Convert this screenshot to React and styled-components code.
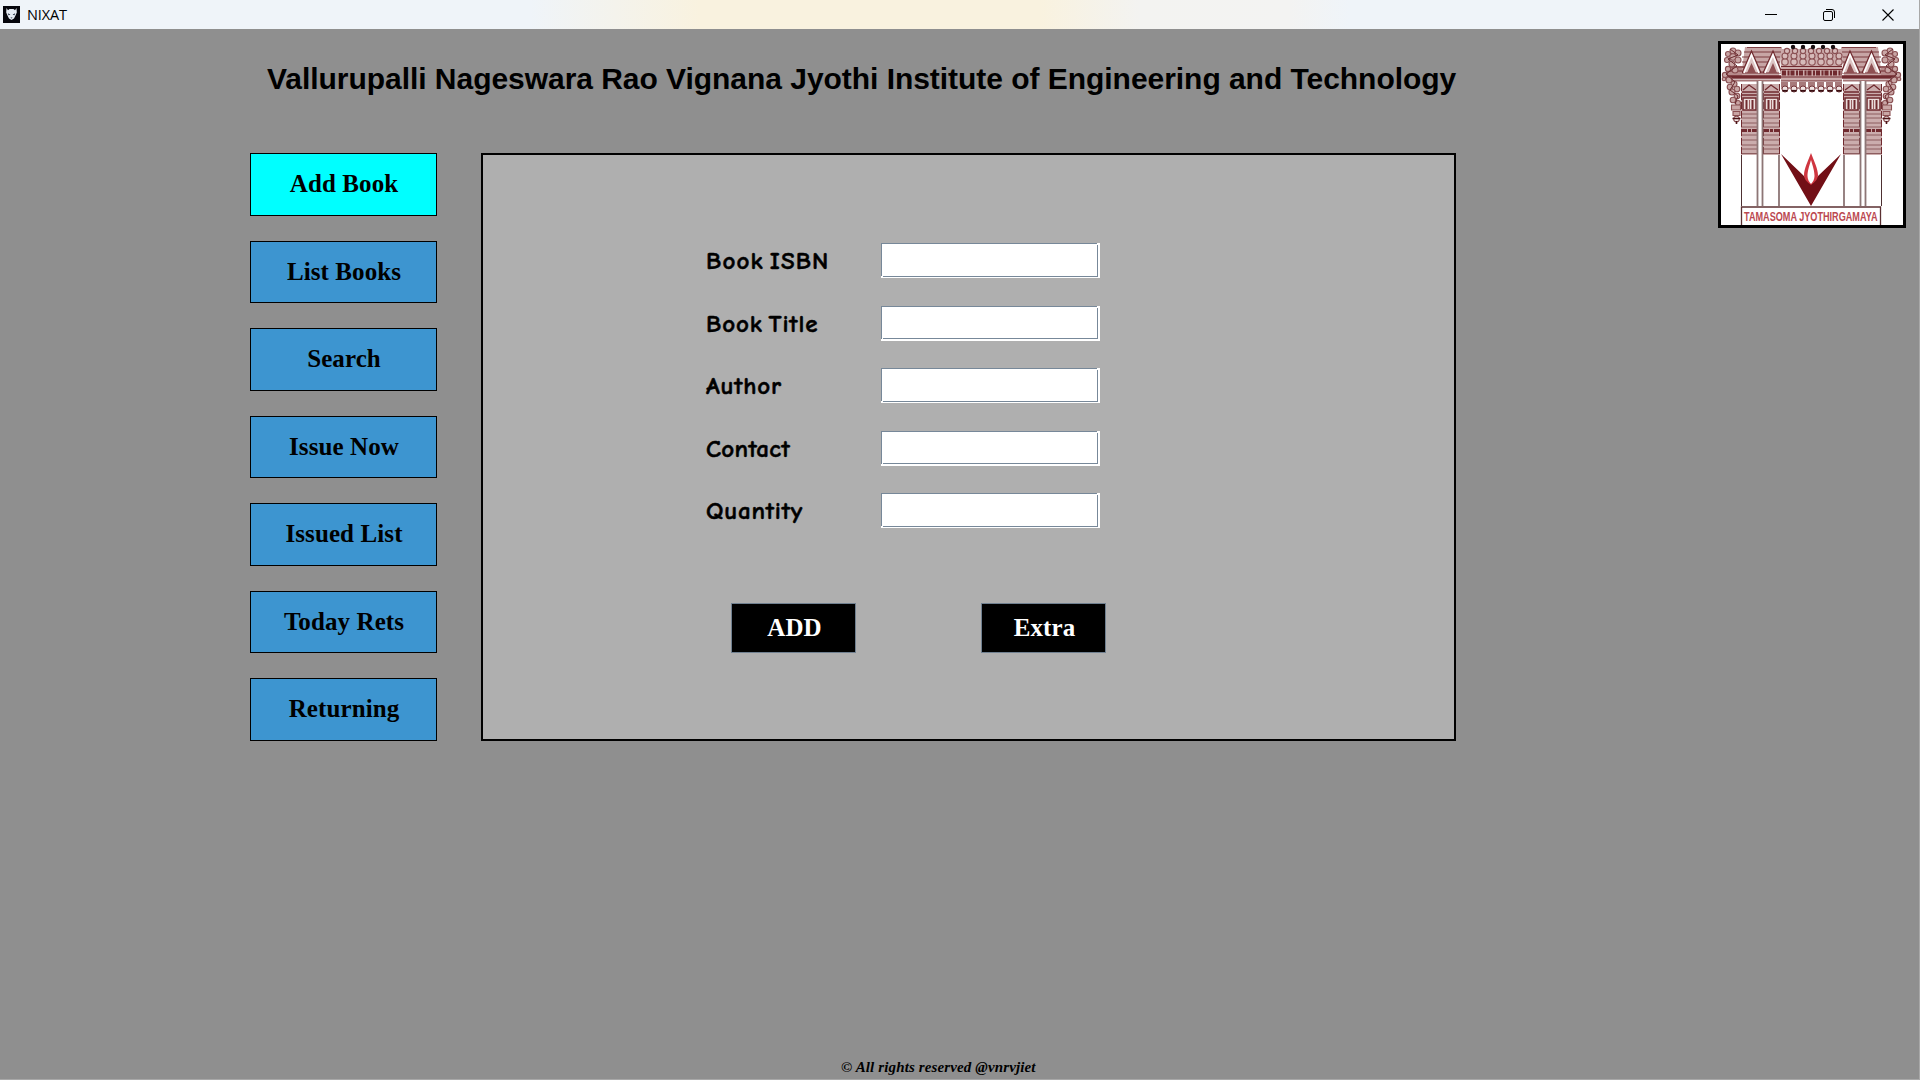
import React from 'react';
import styled, { createGlobalStyle } from 'styled-components';

const Global = createGlobalStyle`
  * { box-sizing: border-box; }
  body { margin: 0; background: #8f8f8f; overflow: hidden; }
`;

const Window = styled.div`
  width: 1920px;
  height: 1080px;
  display: flex;
  flex-direction: column;
  background: #8f8f8f;
  border-right: 1px solid #a8a8a8;
  border-bottom: 1px solid #a8a8a8;
  color: #000;
`;

const TitleBar = styled.header`
  height: 29px;
  flex: none;
  display: flex;
  align-items: center;
  padding: 0 0 0 3px;
  background: linear-gradient(90deg, #eff4f9 0, #eff4f9 530px, #f9f2df 700px, #f9f2df 1040px, #f3f3f1 1140px, #f3f3f2 1290px, #eff4f9 1350px);
`;

const AppName = styled.span`
  flex: 1;
  margin-left: 7px;
  font: 14.5px/28px "Open Sans", "Noto Sans", sans-serif;
  letter-spacing: -0.1px;
`;

const Controls = styled.div`
  display: flex;
  margin-right: 2px;
`;

const Control = styled.button`
  width: 58.5px;
  height: 28px;
  border: 0;
  padding: 0;
  background: none;
  display: grid;
  place-items: center;
`;

const Header = styled.div`
  display: flex;
  justify-content: space-between;
  align-items: flex-start;
  height: 124px;
  flex: none;
  padding: 12px 13px 0 267px;
`;

const Title = styled.h1`
  margin: 19px 0 0;
  font: bold 30px/37px "Liberation Sans", Arial, sans-serif;
  letter-spacing: -0.04px;
  white-space: nowrap;
`;

const Emblem = styled.div`
  width: 188px;
  height: 187px;
  border: 3px solid #000;
  background: #fff;
`;

const Main = styled.main`
  flex: 1;
  display: flex;
  align-items: flex-start;
  gap: 44px;
  padding-left: 250px;
`;

const Menu = styled.nav`
  display: flex;
  flex-direction: column;
  gap: 25px;
  width: 187px;
`;

const serifBold = `
  font: bold 25px/30px "Liberation Serif", "Times New Roman", serif;
  letter-spacing: 0.1px;
  padding: 0;
`;

const MenuButton = styled.button`
  ${serifBold}
  height: 62.5px;
  border: 1px solid #000;
  background: ${(p) => (p.$active ? '#00ffff' : '#3d95d0')};
  color: #000;
  padding-left: 1px;
`;

const Panel = styled.section`
  width: 975px;
  height: 588px;
  border: 2px solid #000;
  background: #afafaf;
  padding: 88px 0 0 223px;
`;

const Fields = styled.form`
  display: flex;
  flex-direction: column;
  gap: 27.5px;
`;

const Row = styled.label`
  display: flex;
  align-items: flex-start;
  height: 35px;
  --line: 33px;
  &:nth-child(even) { --line: 32px; }
`;

const LabelText = styled.span`
  width: 175px;
  font: 700 25px/36px "Comic Sans MS", "Comic Neue", "Open Sans", sans-serif;
  letter-spacing: ${(p) => p.$spacing}px;
  word-spacing: -4px;
  -webkit-text-stroke: 0.5px #000;
  white-space: nowrap;
`;

const ink = 'linear-gradient(#778899, #778899)';
const Input = styled.input`
  width: 219px;
  height: 35px;
  border: 0;
  padding: 2px 4px;
  outline: 0;
  background:
    ${ink} 0 0 / 216px 1px no-repeat,
    ${ink} 0 0 / 1px 33px no-repeat,
    ${ink} 216px 2px / 1px 31px no-repeat,
    ${ink} 2px var(--line) / 215px 1px no-repeat,
    #fff;
`;

const Actions = styled.div`
  display: flex;
  gap: 125px;
  margin: 75px 0 0 25px;
`;

const Action = styled.button`
  ${serifBold}
  width: 125px;
  height: 50px;
  border: 1px solid #708090;
  background: #000;
  color: #fff;
  padding-left: 2px;
`;

const Footer = styled.footer`
  height: 22px;
  flex: none;
  padding-left: 841px;
  font: italic bold 15px/20px "Liberation Serif", "Times New Roman", serif;
  letter-spacing: 0.13px;
  white-space: nowrap;
`;

const AppIcon = () => (
  <svg width="17" height="17" viewBox="0 0 17 17">
    <rect width="17" height="17" fill="#05060c" />
    <path d="M3.500 2l1.500 2.300 1.500-1.300h4l1.500 1.300L13.500 2l.3 4.500-1.300 3-1.500 3-2.500 1.500-2.500-1.500-1.500-3L3.200 6.500z" fill="#e6edf5" />
    <path d="M4.800 7.200l2.600 1.500-1.800.6zM12.200 7.200L9.600 8.700l1.800.6zM7.400 11.500h2.200l-1.100 1z" fill="#152033" />
  </svg>
);

const maroon = '#702a2f';

const Pillar = ({ x }) => (
  <g transform={`translate(${x} 0)`}>
    <rect x="0" y="40" width="17" height="71" fill="#cbadad" />
    <path d="M1 48h15M2 46l6-5 7 5M1 51h15" stroke={maroon} strokeWidth="1.3" fill="none" />
    <path d="M2 54h13v12H2z" fill="#eadcdb" stroke={maroon} strokeWidth="1.5" />
    <path d="M5.500 56v9M11.500 56v9" stroke={maroon} strokeWidth="2" />
    <path d="M8.500 56v9" stroke="#9a6163" strokeWidth="1" />
    <path d="M0 70h17M0 74h17M0 79h17M0 83h17M0 91h17M0 96h17M0 101h17M0 105h17M0 109.500h17" stroke="#8c5d5f" strokeWidth="1" />
    <path d="M1 86.500h15" stroke={maroon} strokeWidth="3" strokeDasharray="5 1 3 1" />
    <path d="M.5 40v71M16.500 40v71" stroke={maroon} strokeWidth="1" strokeDasharray="7 2" />
  </g>
);

const curls = [
  [12, 7, 3], [17, 9, 3], [7, 10, 2.5], [12, 13, 3.2], [6, 16, 2.5], [17, 16, 3],
  [11, 20, 3], [7, 25, 2.6], [14, 26, 3], [4, 31, 2.6], [3, 35, 1.8], [8, 36, 3],
  [13, 40, 3], [9, 43, 2.8], [16, 45, 2.8], [11, 48, 3], [16, 52, 2.8], [12, 56, 2.8], [17, 59, 2.5],
];

const RoofHalf = () => (
  <g>
    <path d="M24 3h37l-3 30H20z" fill="#c7a5a5" />
    <path d="M26 3.500h34M23 8h37M21 13h38M21 18h38M19 23h40M17 28h42" stroke="#7d3d41" strokeWidth="1.2" />
    <path d="M21 29L30.500 7 40 29zM42 29L52 7l9 22z" fill="#dcc5c4" stroke={maroon} strokeWidth="1.2" />
    <path d="M23 29l7.500-18L38 29M44 29l8-18 7 18" fill="none" stroke="#fff" strokeWidth="1.500" />
    <path d="M26 29l4.500-10 4.500 10zM47.500 29l4.500-10 4 10z" fill="#8f5053" />
    <path d="M5 22h16v10H5z" fill="#b78b8c" />
    <path d="M5 23h18M5 27h16" stroke={maroon} strokeWidth="1" />
    <path d="M3 33h57" stroke={maroon} strokeWidth="3.500" />
    <path d="M7 36.500h52" stroke="#a57576" strokeWidth="2" />
    <g fill="#c9a6a5" stroke="#8a5053" strokeWidth="1.100">
      {curls.map(([cx, cy, r]) => <circle key={`${cx}-${cy}`} cx={cx} cy={cy} r={r} />)}
      <path d="M10.500 61h9v5h-9zM12 67.500h7v4h-7z" />
      <circle cx="15.500" cy="75" r="2.800" fill="#f3e9e8" />
    </g>
    <path d="M9 5l8 6-10 4 9 7-11 8 9 8-5 8 8 6-3 8" fill="none" stroke="#6a2c30" strokeWidth="1" />
    <path d="M11.500 74.500h8M15.500 77v3" stroke="#4d1518" strokeWidth="1.600" />
    <path d="M36.500 37h5.500v75h-5.500z" fill="#fff" />
    <Pillar x={20} />
    <Pillar x={42} />
    <path d="M20.500 111v51" stroke="#4d3031" strokeWidth="1" />
    <path d="M36.500 37v125M41.500 37v125M58 111v51" stroke="#8d7676" strokeWidth="1.800" />
  </g>
);

const Logo = () => (
  <svg width="182" height="181" viewBox="0 0 182 181">
    <RoofHalf />
    <g transform="translate(181 0) scale(-1 1)"><RoofHalf /></g>
    <path d="M60 5h61v32H60z" fill="#cbaaaa" />
    <path d="M60 22.500h61M60 25.500h61M60 33h61M60 37h61M60 44h61" stroke={maroon} strokeWidth="1.200" />
    <path d="M61 29h60" stroke={maroon} strokeWidth="5" strokeDasharray="4 1.500 2 1" />
    {[0, 1, 2, 3, 4, 5, 6].map((i) => (
      <g key={i} stroke="#8a5053" strokeWidth="1.100" fill="#d6bab9">
        <circle cx={64 + i * 9} cy="18" r="3.200" />
        <circle cx={64 + i * 9} cy="12" r="3" />
        <circle cx={66 + i * 8} cy="7" r="2.600" />
      </g>
    ))}
    {[0, 1, 2, 3, 4].map((i) => (
      <circle key={i} cx={72 + i * 10} cy="3" r="2.200" fill="#1b1112" />
    ))}
    {[0, 1, 2, 3, 4, 5, 6].map((i) => (
      <g key={i}>
        <path d={`M${60 + i * 9} 38h7v5h-7z`} fill="#a77a7b" />
        <circle cx={64 + i * 9} cy="45" r="3" fill="#f1e5e4" stroke="#76383c" />
        <path d={`M${61.500 + i * 9} 46.800h5`} stroke="#3b1013" strokeWidth="1.800" />
      </g>
    ))}
    <path d="M60 110L83 132 90 140 97 132 120 110 90 162z" fill="#720f16" />
    <path d="M90 109c-3 8-7 16-7 22 0 4 3 7 7 10 4-3 7-6 7-10 0-6-4-14-7-22z" fill="#cf3640" />
    <path d="M90 116c-2 7-3.500 11-3.500 16 0 3 1.500 6 3.500 8 2-2 3.500-5 3.500-8 0-5-1.500-9-3.500-16z" fill="#fff" />
    <path d="M20.500 181v-18h139v18" fill="#fff" stroke="#5b3032" strokeWidth="1.300" />
    <text transform="translate(23 176.500) scale(.75 1)" textLength="178" lengthAdjust="spacingAndGlyphs" fontFamily="Liberation Sans, Arial, sans-serif" fontSize="13" fontWeight="bold" fill="#bb4850">TAMASOMA JYOTHIRGAMAYA</text>
  </svg>
);

const menu = ['Add Book', 'List Books', 'Search', 'Issue Now', 'Issued List', 'Today Rets', 'Returning'];
const fields = [['Book ISBN', 1.1], ['Book Title', 0.85], ['Author', 0.8], ['Contact', 0.3], ['Quantity', 0.8]];

export default function App() {
  return (
    <Window>
      <Global />
      <TitleBar>
        <AppIcon />
        <AppName>NIXAT</AppName>
        <Controls>
          <Control aria-label="Minimize">
            <svg width="12" height="12"><path d="M0 5.500h12" stroke="#000" /></svg>
          </Control>
          <Control aria-label="Restore">
            <svg width="12" height="12" fill="none" stroke="#000">
              <rect x=".5" y="2.500" width="9" height="9" rx="1.500" />
              <path d="M3 .5h6a2.500 2.500 0 0 1 2.500 2.500v6" />
            </svg>
          </Control>
          <Control aria-label="Close">
            <svg width="12" height="12"><path d="M.5 .5l11 11M11.500 .5l-11 11" stroke="#000" strokeWidth="1.100" /></svg>
          </Control>
        </Controls>
      </TitleBar>
      <Header>
        <Title>Vallurupalli Nageswara Rao Vignana Jyothi Institute of Engineering and Technology</Title>
        <Emblem><Logo /></Emblem>
      </Header>
      <Main>
        <Menu>
          {menu.map((name, i) => <MenuButton key={name} $active={i === 0}>{name}</MenuButton>)}
        </Menu>
        <Panel>
          <Fields>
            {fields.map(([name, spacing]) => (
              <Row key={name}>
                <LabelText $spacing={spacing}>{name}</LabelText>
                <Input />
              </Row>
            ))}
          </Fields>
          <Actions>
            <Action>ADD</Action>
            <Action>Extra</Action>
          </Actions>
        </Panel>
      </Main>
      <Footer>© All rights reserved @vnrvjiet</Footer>
    </Window>
  );
}
